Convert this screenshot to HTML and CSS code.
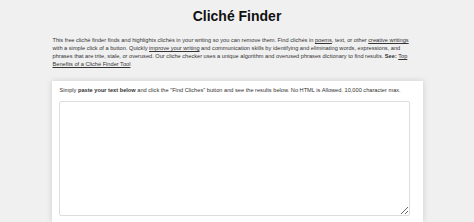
FILE: index.html
```html
<!DOCTYPE html>
<html lang="en">

<head>
    <meta charset="UTF-8">
    <meta name="viewport" content="width=device-width, initial-scale=1.0">
    <title>Cliché Finder</title>
    <link rel="stylesheet" href="styles.css">
</head>

<body>
    <div class="container">
        <h1>Cliché Finder</h1>
        <p class="intro">
            This free cliché finder finds and highlights clichés in your writing so you can remove them. Find clichés in
            <a href="#">poems</a>, text, or other <a href="#">creative writings</a> with a simple click of a button.
            Quickly <a href="#">improve your writing</a> and communication skills by identifying and eliminating words,
            expressions, and phrases that are trite, stale, or overused. Our cliche checker uses a unique algorithm and
            overused phrases dictionary to find results. <strong>See:</strong>
            <a href="#">Top Benefits of a Cliché Finder Tool</a>
        </p>

        <div class="card">
            <p class="hint">Simply <strong>paste your text below</strong> and click the "Find Cliches" button and see the results below. No HTML is Allowed. 10,000 character max.</p>
            <textarea id="text" name="text"></textarea>
        </div>
    </div>
</body>

</html>
```

FILE: styles.css
```css
body {
    font-family: "Liberation Sans", Arial, sans-serif;
    margin: 0;
    background-color: #f0f0f0;
    color: #333;
}

.container {
    width: 371px;
    margin: 0 auto;
}

h1 {
    font-size: 14px;
    font-weight: bold;
    color: #111;
    text-align: center;
    margin: 0;
    padding-top: 8px;
    line-height: 16px;
}

.intro {
    font-size: 5.65px;
    line-height: 8px;
    margin: 12px 0 0 1px;
    padding-right: 8px;
}

.intro a {
    color: #333;
}

.card {
    margin-top: 13px;
    padding: 5px 13px 6px 7px;
    background-color: white;
    box-shadow: 0 0 6px rgba(0, 0, 0, 0.15);
}

.hint {
    font-size: 5.65px;
    line-height: 8px;
    margin: 0 0 7px 1px;
}

textarea {
    display: block;
    width: 100%;
    height: 115px;
    box-sizing: border-box;
    border: 1px solid #ddd;
    border-radius: 2px;
    resize: vertical;
}
```
